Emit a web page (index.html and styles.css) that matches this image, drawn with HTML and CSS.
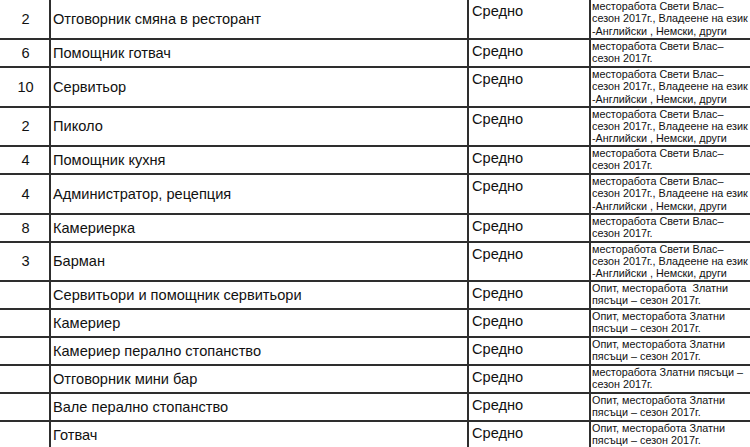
FILE: index.html
```html
<!DOCTYPE html>
<html lang="bg">
<head>
<meta charset="utf-8">
<title>Позиции</title>
<link rel="stylesheet" href="styles.css">
</head>
<body>
<div class="sheet">
  <div class="row tall first">
    <div class="num">2</div><div class="title">Отговорник смяна в ресторант</div><div class="edu">Средно</div>
    <div class="note">месторабота Свети Влас–<br>сезон 2017г., Владеене на език<br>-Английски , Немски, други</div>
  </div>
  <div class="row short">
    <div class="num">6</div><div class="title">Помощник готвач</div><div class="edu">Средно</div>
    <div class="note">месторабота Свети Влас–<br>сезон 2017г.</div>
  </div>
  <div class="row tall">
    <div class="num">10</div><div class="title">Сервитьор</div><div class="edu">Средно</div>
    <div class="note">месторабота Свети Влас–<br>сезон 2017г., Владеене на език<br>-Английски , Немски, други</div>
  </div>
  <div class="row tall">
    <div class="num">2</div><div class="title">Пиколо</div><div class="edu">Средно</div>
    <div class="note">месторабота Свети Влас–<br>сезон 2017г., Владеене на език<br>-Английски , Немски, други</div>
  </div>
  <div class="row short">
    <div class="num">4</div><div class="title">Помощник кухня</div><div class="edu">Средно</div>
    <div class="note">месторабота Свети Влас–<br>сезон 2017г.</div>
  </div>
  <div class="row tall">
    <div class="num">4</div><div class="title">Администратор, рецепция</div><div class="edu">Средно</div>
    <div class="note">месторабота Свети Влас–<br>сезон 2017г., Владеене на език<br>-Английски , Немски, други</div>
  </div>
  <div class="row short">
    <div class="num">8</div><div class="title">Камериерка</div><div class="edu">Средно</div>
    <div class="note">месторабота Свети Влас–<br>сезон 2017г.</div>
  </div>
  <div class="row tall">
    <div class="num">3</div><div class="title">Барман</div><div class="edu">Средно</div>
    <div class="note">месторабота Свети Влас–<br>сезон 2017г., Владеене на език<br>-Английски , Немски, други</div>
  </div>
  <div class="row short">
    <div class="num"></div><div class="title">Сервитьори и помощник сервитьори</div><div class="edu">Средно</div>
    <div class="note">Опит, месторабота&nbsp; Златни<br>пясъци – сезон 2017г.</div>
  </div>
  <div class="row short">
    <div class="num"></div><div class="title">Камериер</div><div class="edu">Средно</div>
    <div class="note">Опит, месторабота Златни<br>пясъци – сезон 2017г.</div>
  </div>
  <div class="row short">
    <div class="num"></div><div class="title">Камериер перално стопанство</div><div class="edu">Средно</div>
    <div class="note">Опит, месторабота Златни<br>пясъци – сезон 2017г.</div>
  </div>
  <div class="row short">
    <div class="num"></div><div class="title">Отговорник мини бар</div><div class="edu">Средно</div>
    <div class="note">месторабота Златни пясъци –<br>сезон 2017г.</div>
  </div>
  <div class="row short">
    <div class="num"></div><div class="title">Вале перално стопанство</div><div class="edu">Средно</div>
    <div class="note">Опит, месторабота Златни<br>пясъци – сезон 2017г.</div>
  </div>
  <div class="row short">
    <div class="num"></div><div class="title">Готвач</div><div class="edu">Средно</div>
    <div class="note">Опит, месторабота Златни<br>пясъци – сезон 2017г.</div>
  </div>
</div>
</body>
</html>
```
FILE: styles.css
```css
html, body {
  margin: 0;
  padding: 0;
  background: #ffffff;
  overflow: hidden;
}

.sheet {
  width: 750px;
  font-family: "Liberation Sans", Arial, sans-serif;
  color: #111111;
}

.row {
  display: grid;
  grid-template-columns: 49px 418px 122px 1fr;
  box-sizing: border-box;
  border-bottom: 2px solid #2e2e2e;
}

.row.tall { height: 39.5px; }
.row.short { height: 28px; }
.row.first { height: 40px; }

.row > div {
  box-sizing: border-box;
  white-space: nowrap;
}

.num {
  display: flex;
  align-items: center;
  justify-content: center;
  font-size: 14.6px;
  padding-left: 2px;
}

.title {
  display: flex;
  align-items: center;
  border-left: 2px solid #2e2e2e;
  padding-left: 2px;
  font-size: 14.6px;
}

.edu {
  border-left: 2px solid #2e2e2e;
  padding: 2px 0 0 3px;
  font-size: 14.6px;
  line-height: 18px;
}

.note {
  border-left: 2px solid #2e2e2e;
  padding: 0 0 0 1px;
  font-size: 10.8px;
  line-height: 12.4px;
}
```
